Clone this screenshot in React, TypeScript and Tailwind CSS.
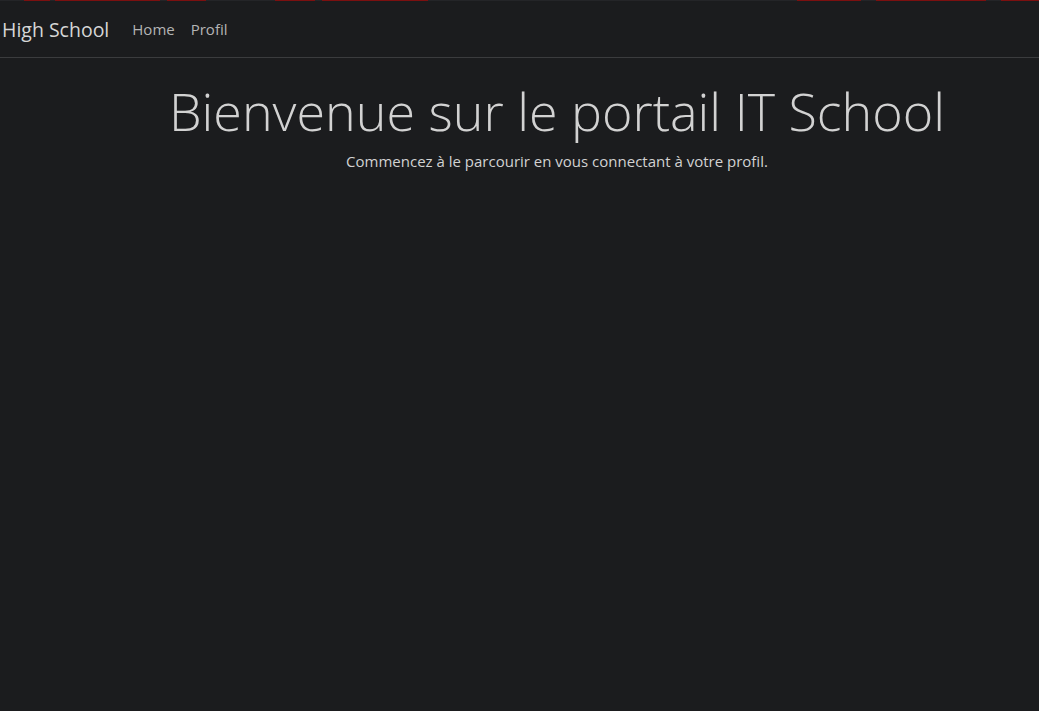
const redBits = [
  [24, 50],
  [55, 160],
  [167, 206],
  [275, 315],
  [322, 428],
  [797, 861],
  [876, 986],
  [1001, 1039],
]

export default function App() {
  return (
    <div className="relative min-h-[711px] bg-[#1b1c1e]" style={{ fontFamily: "'Open Sans', 'Noto Sans', sans-serif" }}>
      {/* thin strip at the very top */}
      <div className="absolute top-0 left-0 right-0 h-px bg-[#242528]">
        {redBits.map(([a, b]) => (
          <div key={a} className="absolute top-0 h-px bg-[#7c1010]" style={{ left: a, width: b - a }} />
        ))}
      </div>

      <nav className="flex items-center h-[58px] border-b border-[#3b3c3e] pl-[2px] pt-[2px]">
        <span className="text-[19.5px] text-[#d6d6d6] mr-[23px]">High School</span>
        <div className="flex gap-[16px] text-[15px] text-[#b4b4b4]">
          <span>Home</span>
          <span>Profil</span>
        </div>
      </nav>

      <main className="pl-[75px] pt-[22px] text-center">
        <h1 className="text-[52px] font-light leading-[1.2] text-[#d2d2d2]">Bienvenue sur le portail IT School</h1>
        <p className="text-[15px] text-[#d2d2d2] mt-[8px]">Commencez à le parcourir en vous connectant à votre profil.</p>
      </main>
    </div>
  )
}
